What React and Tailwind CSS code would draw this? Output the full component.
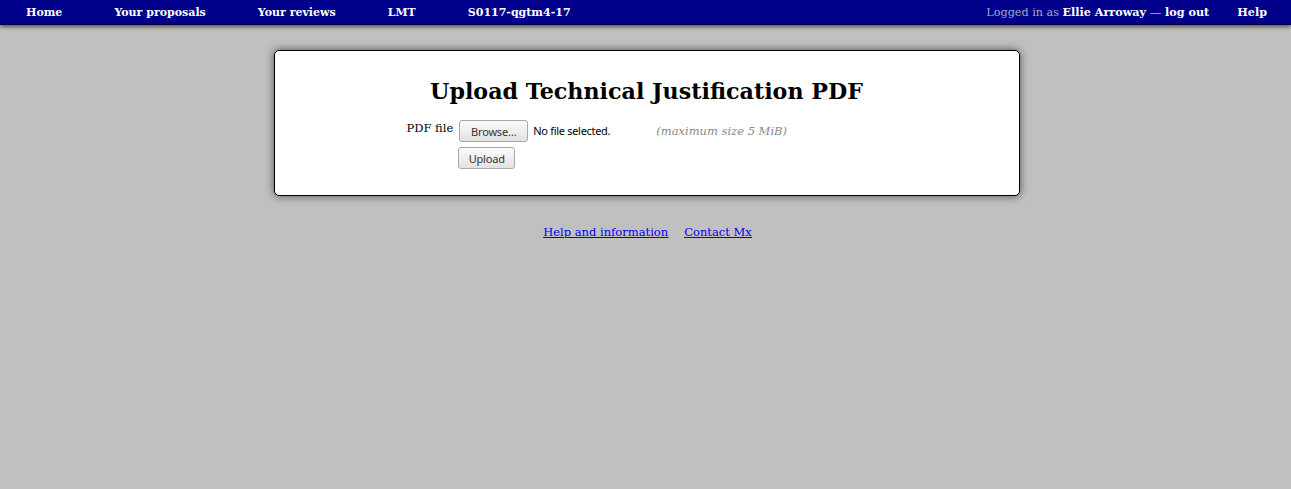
export default function App() {
  const serif = { fontFamily: '"DejaVu Serif", serif' };
  const sans = { fontFamily: '"Noto Sans", sans-serif' };
  const btn =
    "h-[22px] px-0 rounded-[3px] border border-[#a8a8a8] bg-gradient-to-b from-[#fbfbfb] to-[#e2e2e2] text-[11px] tracking-[-0.2px] text-[#333] leading-none";
  return (
    <div className="min-h-[489px] bg-[#c0c0c0] text-[11.5px] text-black" style={serif}>
      <div className="h-[25px] bg-[#00008b] flex items-baseline justify-between text-white font-bold text-[11px] leading-[24px] shadow-[0_2px_4px_rgba(0,0,0,0.55)] border-b border-[#000040]">
        <div className="flex">
          <span className="px-[26px]">Home</span>
          <span className="px-[26px]">Your proposals</span>
          <span className="px-[26px]">Your reviews</span>
          <span className="px-[26px]">LMT</span>
          <span className="px-[26px]">S0117-qgtm4-17</span>
        </div>
        <div className="flex text-[11.2px]">
          <span className="pr-[28px]">
            <span className="font-normal text-[#a8a8c8]">Logged in as </span>
            Ellie Arroway <span className="font-normal">—</span> log out
          </span>
          <span className="pr-[24px]">Help</span>
        </div>
      </div>

      <div className="flex justify-center pt-[25px] pl-[2px]">
        <div className="w-[746px] h-[146px] bg-white border border-black rounded-[5px] shadow-[0_0_8px_rgba(0,0,0,0.6)] flex flex-col">
          <h1 className="self-center mt-[25px] text-[22.2px] font-bold leading-[30px]">
            Upload Technical Justification PDF
          </h1>
          <div className="mt-[14px] ml-[132px] flex items-start">
            <div className="pr-[6px]">PDF file</div>
            <div className="flex flex-col gap-[5px] w-[197px]">
              <div className="flex items-center" style={sans}>
                <button className={btn + " w-[69px]"} style={sans}>
                  Browse…
                </button>
                <span className="ml-[5px] text-[11px] tracking-[-0.3px]">No file selected.</span>
              </div>
              <div>
                <button className={btn + " w-[57px] ml-[-1px]"} style={sans}>
                  Upload
                </button>
              </div>
            </div>
            <div className="pt-[3px] italic text-[#888] text-[11.5px]">(maximum size 5 MiB)</div>
          </div>
        </div>
      </div>

      <div className="flex justify-center gap-[16px] mt-[28px] pl-[4px] text-[#0000ee] underline">
        <a href="#">Help and information</a>
        <a href="#">Contact Mx</a>
      </div>
    </div>
  );
}
